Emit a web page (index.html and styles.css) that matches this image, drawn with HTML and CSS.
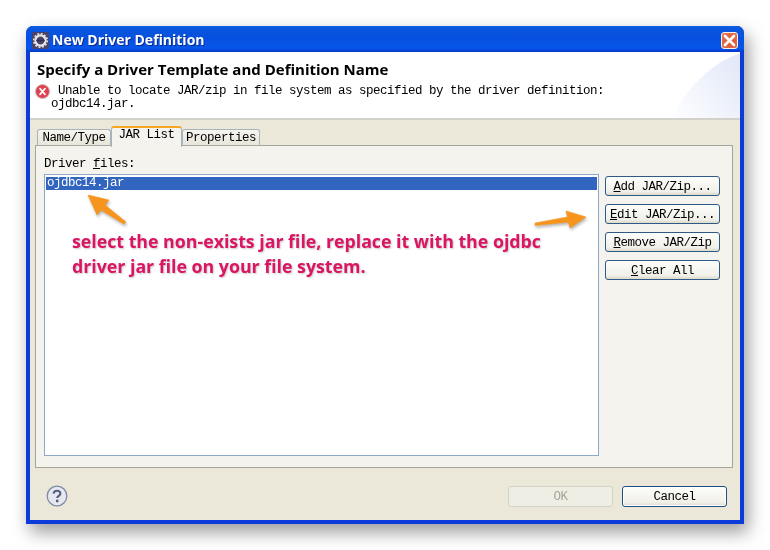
FILE: index.html
```html
<!DOCTYPE html>
<html lang="en">
<head>
<meta charset="utf-8">
<title>New Driver Definition</title>
<link rel="stylesheet" href="styles.css">
</head>
<body>
<div class="window">
  <div class="titlebar">
    <svg class="app-icon" width="17" height="17" viewBox="0 0 20 20">
      <rect x="0" y="0" width="20" height="20" rx="2" fill="#4a4468"/>
      <circle cx="10" cy="10" r="6" fill="none" stroke="#e8e8e8" stroke-width="2.6"/>
      <circle cx="10" cy="10" r="8" fill="none" stroke="#e8e8e8" stroke-width="1.8" stroke-dasharray="2.2 2"/>
      <path d="M5 10h10" stroke="#30305a" stroke-width="1.6"/>
    </svg>
    <span class="title-text">New Driver Definition</span>
    <div class="close-btn">
      <svg width="15" height="15" viewBox="0 0 15 15">
        <path d="M3 3l9 9M12 3l-9 9" stroke="#fff" stroke-width="2.6" stroke-linecap="round"/>
      </svg>
    </div>
  </div>

  <div class="header">
    <svg class="header-art" width="72" height="66" viewBox="0 0 72 66">
      <defs>
        <linearGradient id="swoosh" x1="0" y1="1" x2="1" y2="0.3">
          <stop offset="0" stop-color="#ffffff"/>
          <stop offset="1" stop-color="#e4eaf8"/>
        </linearGradient>
      </defs>
      <path d="M2 66C16 46 32 16 72 1V66Z" fill="url(#swoosh)"/>
    </svg>
    <h1 class="header-title">Specify a Driver Template and Definition Name</h1>
    <div class="message">
      <svg class="error-icon" width="15" height="15" viewBox="0 0 15 15">
        <circle cx="7.5" cy="7.5" r="7" fill="#e0404c" stroke="#c9c0c0" stroke-width="1"/>
        <path d="M5 4.6l5 5.8M10 4.6l-5 5.8" stroke="#fff" stroke-width="1.7" stroke-linecap="round"/>
      </svg>
      <p class="message-text">Unable to locate JAR/zip in file system as specified by the driver definition:<br><span class="message-second">ojdbc14.jar.</span></p>
    </div>
  </div>

  <div class="body">
    <div class="tabs">
      <div class="tab tab-first">Name/Type</div>
      <div class="tab tab-active">JAR List</div>
      <div class="tab">Properties</div>
    </div>
    <div class="panel">
      <div class="list-label">Driver <u>f</u>iles:</div>
      <div class="panel-row">
        <div class="list">
          <div class="list-item">ojdbc14.jar</div>
          <div class="note">select the non-exists jar file, replace it with the ojdbc<br>driver jar file on your file system.</div>
        </div>
        <div class="side-buttons">
          <button class="btn"><u>A</u>dd JAR/Zip...</button>
          <button class="btn"><u>E</u>dit JAR/Zip...</button>
          <button class="btn"><u>R</u>emove JAR/Zip</button>
          <button class="btn"><u>C</u>lear All</button>
        </div>
      </div>
    </div>
    <div class="footer">
      <svg class="help-icon" width="22" height="22" viewBox="0 0 22 22">
        <circle cx="11" cy="11" r="9.8" fill="#e6e8ee" stroke="#7c8aa4" stroke-width="1.3"/>
        <path d="M7.6 8.6C7.8 6.6 9.2 5.7 11 5.7c2 0 3.4 1.1 3.4 2.8 0 2.4-3.2 2.4-3.2 4.6" fill="none" stroke="#4f6086" stroke-width="2.1"/>
        <circle cx="11.2" cy="16" r="1.4" fill="#4f6086"/>
      </svg>
      <div class="footer-buttons">
        <button class="btn btn-wide btn-disabled" disabled>OK</button>
        <button class="btn btn-wide btn-default">Cancel</button>
      </div>
    </div>
  </div>

  <svg class="arrows" width="718" height="498" viewBox="26 26 718 498">
    <path d="M88 195L109 200 105 205 126 222 124 224 101 210 97 215Z" fill="#f7941d" stroke="#f7941d" stroke-width=".6" stroke-linejoin="round"/>
    <path d="M586 217L570 228 568.5 222 535 225.5 535 223 567.5 217 566 211Z" fill="#f7941d" stroke="#f7941d" stroke-width=".6" stroke-linejoin="round"/>
  </svg>
</div>
</body>
</html>
```
FILE: styles.css
```css
* { box-sizing: border-box; }

html, body {
  margin: 0;
  padding: 0;
  background: #fff;
}

body {
  width: 770px;
  height: 550px;
  padding: 26px 0 0 26px;
  overflow: hidden;
}

.window {
  position: relative;
  width: 718px;
  height: 498px;
  display: flex;
  flex-direction: column;
  background: #0a3fe0;
  border-radius: 7px 7px 0 0;
  border: solid #0b3bd8;
  border-width: 0 4px 4px 4px;
  box-shadow: 4px 8px 18px rgba(0, 0, 0, .4);
  filter: blur(.4px);
}

.titlebar {
  height: 26px;
  margin: 0 -4px;
  padding: 2px 5px 0 6px;
  display: flex;
  align-items: center;
  gap: 3px;
  flex: none;
  border-radius: 7px 7px 0 0;
  background: linear-gradient(#0a5fe6 0, #0a55dc 12%, #0650e0 50%, #0656ea 85%, #0438c8 100%);
}

.app-icon { flex: none; }

.title-text {
  flex: 1;
  color: #fff;
  font: bold 14px/1 "Open Sans", "Liberation Sans", sans-serif;
  text-shadow: 1px 1px 0 #0a2a90;
}

.close-btn {
  width: 17px;
  height: 17px;
  margin-right: 1px;
  border: 1px solid #f4f0ee;
  border-radius: 3px;
  background: radial-gradient(circle at 60% 60%, #d8532c, #e87858);
  display: flex;
  align-items: center;
  justify-content: center;
}

.close-btn svg { flex: none; }

.header {
  position: relative;
  height: 68px;
  flex: none;
  padding: 8px 0 0 7px;
  background: #fff;
  border-bottom: 2px solid #d2d1ca;
  overflow: hidden;
}

.header-art {
  position: absolute;
  right: 0;
  bottom: 0;
}

.header-title {
  position: relative;
  margin: 0;
  font: bold 15px/18px "Open Sans", "Liberation Sans", sans-serif;
  color: #000;
}

.message {
  position: relative;
  display: flex;
  margin-top: 6px;
}

.error-icon {
  flex: none;
  margin-left: -2px;
}

.message-text {
  margin: 1px 0 0 8px;
  font: 12.5px/13px "Liberation Mono", monospace;
  letter-spacing: -.5px;
  color: #000;
  white-space: nowrap;
}

.message-second { margin-left: -7px; }

.body {
  flex: 1;
  display: flex;
  flex-direction: column;
  background: #ebe8d9;
  padding: 6px 7px 0 5px;
  min-height: 0;
}

.tabs {
  display: flex;
  align-items: flex-end;
  height: 20px;
  flex: none;
  padding-left: 2px;
  position: relative;
  z-index: 1;
  margin-bottom: -1px;
}

.tab {
  height: 17px;
  padding: 0 3px;
  font: 12.5px/16px "Liberation Mono", monospace;
  letter-spacing: -.5px;
  color: #000;
  background: linear-gradient(#f6f5ef, #e8e6da);
  border: 1px solid #a9b3bb;
  border-bottom: 1px solid #a9a89e;
  border-radius: 3px 3px 0 0;
  text-align: center;
}

.tab-first { width: 74px; }

.tab-active {
  width: 71px;
  height: 21px;
  margin: 0 0 -1px;
  line-height: 15px;
  background: #f4f3ee;
  border-color: #a9b3bb;
  border-top: 2px solid #f5a623;
  border-bottom: 0;
}

.tab:last-child { width: 78px; }

.panel {
  height: 323px;
  flex: none;
  display: flex;
  flex-direction: column;
  background: #f4f3ee;
  border: 1px solid #a5a59c;
  padding: 9px 12px 11px 8px;
}

.list-label {
  font: 12.5px/18px "Liberation Mono", monospace;
  letter-spacing: -.5px;
  color: #000;
  height: 19px;
  flex: none;
}

.panel-row {
  flex: 1;
  display: flex;
  gap: 6px;
  min-height: 0;
}

.list {
  position: relative;
  width: 555px;
  background: #fff;
  border: 1px solid #8fa8c8;
  padding: 2px 1px 1px;
}

.list-item {
  height: 13px;
  padding-left: 1px;
  background: #3165c0;
  color: #fff;
  font: 12.5px/13px "Liberation Mono", monospace;
  letter-spacing: -.5px;
}

.note {
  position: absolute;
  left: 27px;
  top: 54px;
  font: bold 17.75px/25px "Open Sans", "Liberation Sans", sans-serif;
  color: #dc1464;
  white-space: nowrap;
  text-shadow: 1px 1px 2px rgba(0, 0, 0, .22);
}

.side-buttons {
  display: flex;
  flex-direction: column;
  gap: 8px;
  padding-top: 2px;
}

.btn {
  width: 115px;
  height: 20px;
  padding: 1px 0 0;
  background: linear-gradient(#fdfdfb, #f1f0e9 80%, #dcd9cc);
  border: 1px solid #2f5a85;
  border-radius: 3px;
  color: #000;
  font: 12.5px/18px "Liberation Mono", monospace;
  letter-spacing: -.5px;
  text-align: center;
  white-space: nowrap;
}

.footer {
  flex: 1;
  display: flex;
  align-items: center;
  justify-content: space-between;
  padding: 3px 6px 0 11px;
}

.help-icon { flex: none; }

.footer-buttons {
  display: flex;
  gap: 9px;
  margin-top: 1px;
}

.btn-wide {
  width: 105px;
  height: 21px;
}

.btn-disabled {
  color: #a5a498;
  background: #efeee5;
  border-color: #d4d2c4;
}

.btn-default {
  border-color: #1d4f86;
  box-shadow: inset 0 0 0 1px #fff;
}

.arrows {
  position: absolute;
  left: -4px;
  top: 0;
  pointer-events: none;
  filter: drop-shadow(1px 2px 1.5px rgba(0, 0, 0, .3));
}
```
